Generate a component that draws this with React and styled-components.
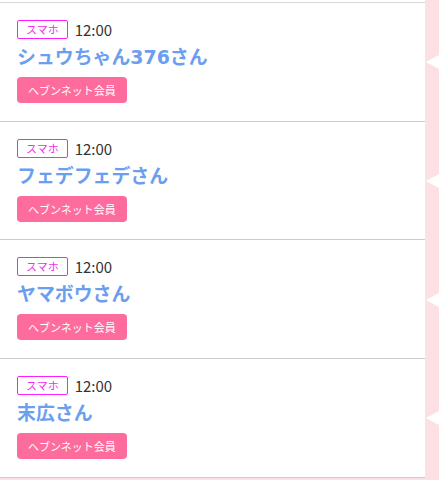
import React from "react";
import styled, { createGlobalStyle } from "styled-components";

const GlobalStyle = createGlobalStyle`
  html, body { margin: 0; padding: 0; background: #fde0e3; }
  body { font-family: "Noto Sans CJK JP", "Noto Sans", sans-serif; }
`;

const Page = styled.div`
  width: 439px;
  min-height: 480px;
  background: #fde0e3;
  display: flex;
  flex-direction: column;
`;

const TopEdge = styled.div`
  width: 425px;
  height: 2px;
  background: #fff;
  border-bottom: 1px solid #d8d8d8;
`;

const Row = styled.div`
  display: flex;
  align-items: stretch;
`;

const Card = styled.div`
  width: 425px;
  box-sizing: border-box;
  background: #fff;
  border-bottom: 1px solid #cccccc;
  padding: 17px 16px 17.7px 17px;
  display: flex;
  flex-direction: column;
`;

const Rail = styled.div`
  flex: 1;
  display: flex;
  align-items: center;
  justify-content: flex-end;
  border-left: 1px solid #f3e6e6;
`;

const Meta = styled.div`
  display: flex;
  align-items: center;
  gap: 7px;
  height: 19px;
`;

const DeviceTag = styled.span`
  box-sizing: border-box;
  height: 19px;
  padding: 0 8px;
  border: 1px solid #ff1cff;
  border-radius: 2px;
  color: #f02cf0;
  font-size: 11px;
  line-height: 17px;
  display: inline-flex;
  align-items: center;
`;

const Time = styled.span`
  font-size: 15px;
  color: #333;
  line-height: 19px;
`;

const Name = styled.h3`
  margin: 6px 0 0;
  font-family: "DejaVu Sans", "Noto Sans CJK JP", sans-serif;
  font-size: 18.9px;
  line-height: 25px;
  font-weight: bold;
  color: #6c9ef0;
`;

const MemberBadge = styled.span`
  align-self: flex-start;
  margin-top: 7px;
  height: 26px;
  padding: 0 11px;
  border-radius: 4px;
  background: #fd6c9c;
  color: #fff;
  font-size: 11px;
  line-height: 26px;
`;

const Arrow = () => (
  <svg width="13" height="14" viewBox="0 0 13 14" style={{ display: "block" }}>
    <polygon points="0,7 13,0 13,14" fill="#ffffff" />
  </svg>
);

const entries = [
  { name: "シュウちゃん376さん", time: "12:00" },
  { name: "フェデフェデさん", time: "12:00" },
  { name: "ヤマボウさん", time: "12:00" },
  { name: "末広さん", time: "12:00" },
];

export default function App() {
  return (
    <>
      <GlobalStyle />
      <Page>
        <TopEdge />
        {entries.map((e, i) => (
          <Row key={i}>
            <Card>
              <Meta>
                <DeviceTag>スマホ</DeviceTag>
                <Time>{e.time}</Time>
              </Meta>
              <Name>{e.name}</Name>
              <MemberBadge>ヘブンネット会員</MemberBadge>
            </Card>
            <Rail>
              <Arrow />
            </Rail>
          </Row>
        ))}
      </Page>
    </>
  );
}
